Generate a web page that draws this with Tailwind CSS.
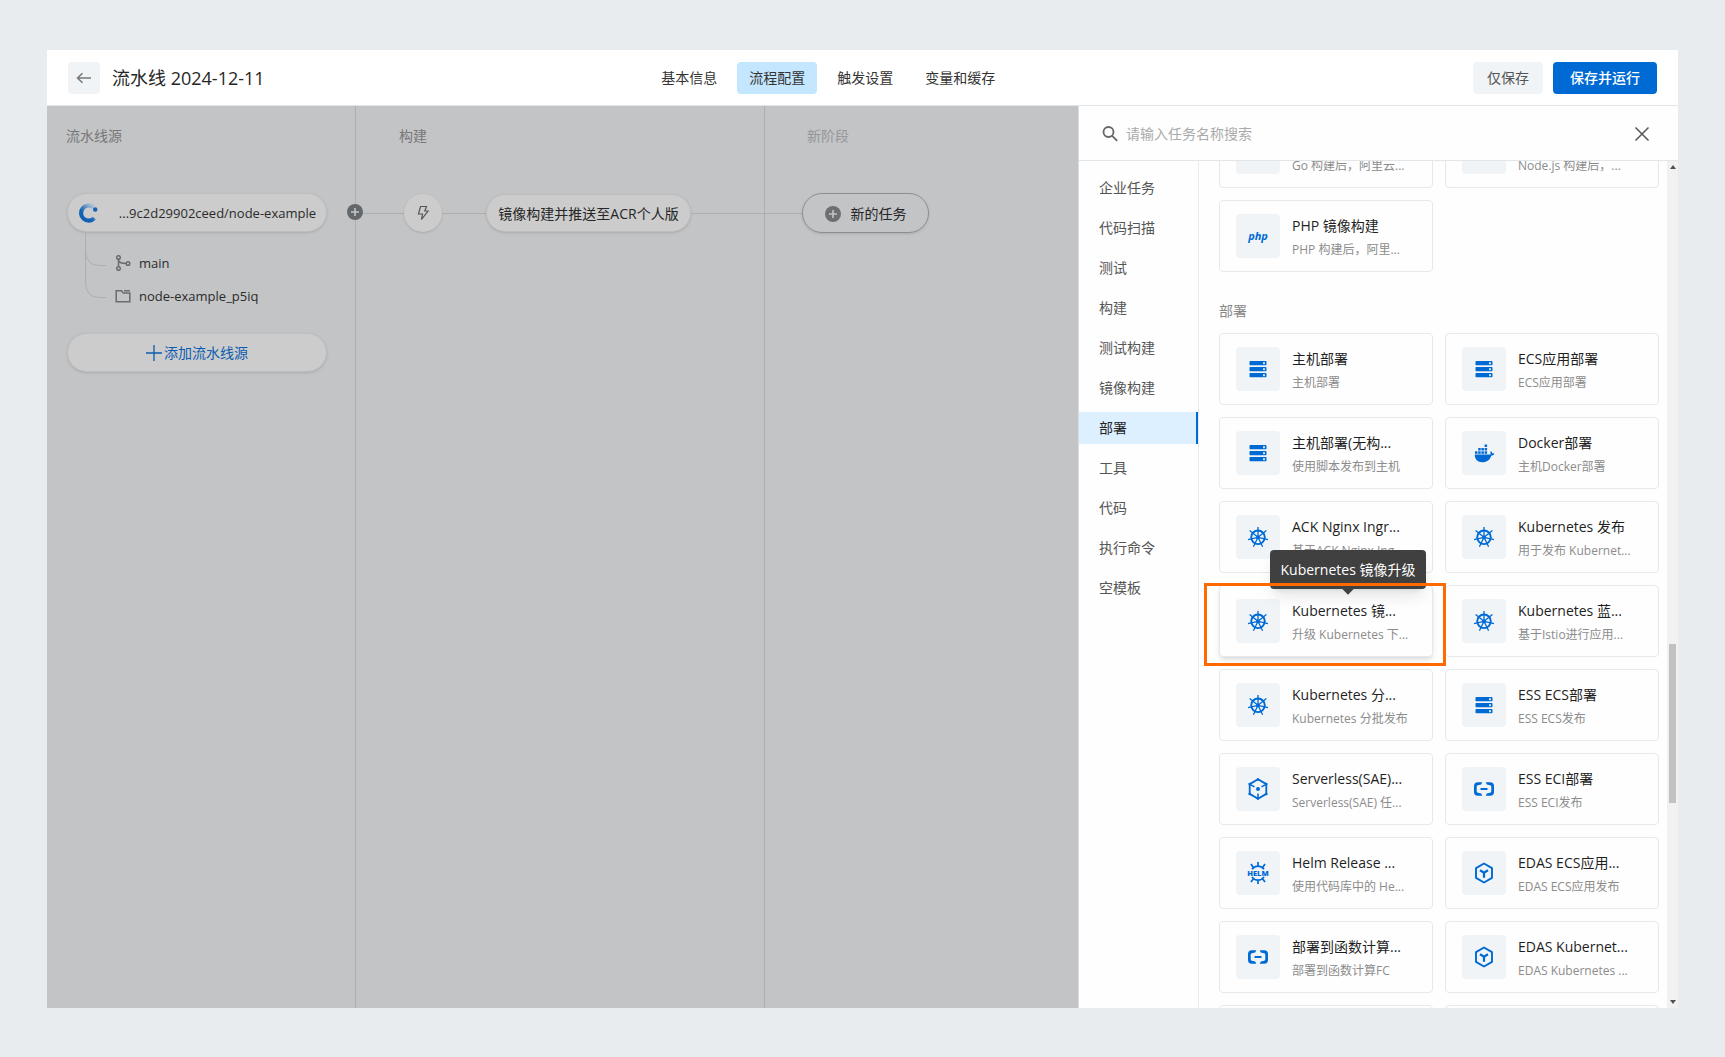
<!DOCTYPE html>
<html lang="zh-CN">
<head>
<meta charset="utf-8">
<title>流水线 2024-12-11</title>
<script src="https://cdn.jsdelivr.net/npm/@tailwindcss/browser@4"></script>
</head>
<body class="flex h-screen flex-col overflow-hidden bg-[#e8ecef] px-[47px] pt-[50px] pb-[49px] font-['Open_Sans','Noto_Sans_CJK_SC',sans-serif] text-sm text-[#333]">

<svg class="hidden" aria-hidden="true">
  <symbol id="server" viewBox="0 0 24 24"><g fill="#006ad4"><rect x="3.500" y="4" width="17" height="4.300" rx=".8"/><rect x="3.500" y="10" width="17" height="4.300" rx=".8"/><rect x="3.500" y="16" width="17" height="4.300" rx=".8"/></g><g fill="#cfe2f6"><rect x="17" y="5.200" width="2" height="2"/><rect x="17" y="11.200" width="2" height="2"/><rect x="17" y="17.200" width="2" height="2"/></g></symbol>
  <symbol id="docker" viewBox="0 0 24 24"><g fill="#006ad4"><path d="M2.800 13.600h15.700c.3-1 .1-1.900-.3-2.700l.8-.6c.8.600 1.300 1.400 1.400 2.100.8-.1 1.500 0 2 .3-.5 1.200-1.600 1.800-3 1.800-1.500 4.500-4.500 6.800-8.900 6.800-4.900 0-7.800-2.800-7.700-7.700z"/><rect x="3" y="10.300" width="2.500" height="2.500"/><rect x="6.200" y="10.300" width="2.500" height="2.500"/><rect x="9.400" y="10.300" width="2.500" height="2.500"/><rect x="12.600" y="10.300" width="2.500" height="2.500"/><rect x="6.200" y="7" width="2.500" height="2.500"/><rect x="9.400" y="7" width="2.500" height="2.500"/><rect x="12.600" y="7" width="2.500" height="2.500"/><rect x="12.600" y="3.500" width="2.500" height="2.500"/></g></symbol>
  <symbol id="k8s" viewBox="0 0 24 24"><g fill="none" stroke="#006ad4"><circle cx="12" cy="12.300" r="6.800" stroke-width="1.900"/><path d="M12 12.300V2M12 12.300l8.400-6.700M12 12.300l10 2.300M12 12.300l4.600 9.500M12 12.300l-4.600 9.500M12 12.300l-10 2.300M12 12.300L3.600 5.600" stroke-width="1.300"/></g><circle cx="12" cy="12.300" r="1.900" fill="#006ad4"/></symbol>
  <symbol id="sae" viewBox="0 0 24 24"><g fill="none" stroke="#006ad4" stroke-width="1.800"><path d="M12 2.300l8.300 4.800v9.800L12 21.700l-8.300-4.800V7.100z"/><path d="M4 7.300l4.500 2.600M20 7.300l-4.500 2.600M12 21.500v-5" stroke-width="1.500"/></g><g fill="#006ad4"><circle cx="12" cy="12" r="2"/><circle cx="12" cy="2.500" r="1.300"/><circle cx="12" cy="21.500" r="1.300"/><circle cx="3.700" cy="7" r="1.300"/><circle cx="20.300" cy="7" r="1.300"/><circle cx="3.700" cy="17" r="1.300"/><circle cx="20.300" cy="17" r="1.300"/></g></symbol>
  <symbol id="aliyun" viewBox="0 0 24 24"><path d="M10.300 5.300L9.200 7.400 5.900 8.200Q4.700 8.600 4.700 9.600v4.800q0 1 1.200 1.400l3.300.8 1.100 2.100H5.800Q2 18.500 2 15V9q0-3.500 3.800-3.700zM13.700 5.300l1.100 2.100 3.300.8q1.200.4 1.200 1.400v4.800q0 1-1.200 1.400l-3.300.8-1.100 2.100h4.500Q22 18.500 22 15V9q0-3.500-3.800-3.700zM8.500 11h7v2h-7z" fill="#006ad4"/></symbol>
  <symbol id="helm" viewBox="0 0 24 24"><g fill="none" stroke="#006ad4" stroke-width="1.700"><path d="M6 8.300a7.200 7.200 0 0 1 12 0M6 15.900a7.200 7.200 0 0 0 12 0M12 5V1M12 19v4M7.200 6.300L5 3M16.800 6.300L19 3M7.200 17.900L5 21M16.800 17.900L19 21"/></g><text x="12" y="14.800" text-anchor="middle" font-family="Open Sans" font-weight="800" font-size="7.500" fill="#006ad4">HELM</text></symbol>
  <symbol id="edas" viewBox="0 0 24 24"><g fill="none" stroke="#006ad4" stroke-width="1.900"><path d="M12 2.500l8 4.600v9.800l-8 4.600-8-4.600V7.100z" stroke-linejoin="round"/><path d="M8 9.300l4 2.500 4-2.500M12 11.800v5" stroke-width="2.200"/></g></symbol>
  <symbol id="php" viewBox="0 0 24 24"><text x="12" y="15.500" text-anchor="middle" font-family="Open Sans" font-weight="700" font-style="italic" font-size="11" fill="#006ad4">php</text></symbol>
  <symbol id="node" viewBox="0 0 24 24"><path d="M12 1l7.500 4.300v9L12 18.600l-7.500-4.300v-9z" fill="none" stroke="#006ad4" stroke-width="2"/></symbol>
</svg>

<header class="grid h-14 shrink-0 grid-cols-[17fr_auto_19fr] items-center border-b border-[#e3e6e9] bg-white px-[21px]">
  <div class="flex items-center gap-3">
    <button type="button" aria-label="返回" class="flex size-8 items-center justify-center rounded bg-[#f0f4f7]">
      <svg class="size-4" viewBox="0 0 16 16" fill="none" stroke="#777" stroke-width="1.500"><path d="M15 8H1.500M6.500 3.200L1.500 8l5 4.800"/></svg>
    </button>
    <h1 class="text-lg leading-6 text-[#262626]">流水线 2024-12-11</h1>
  </div>
  <nav class="flex gap-2 leading-5">
    <a href="#" class="rounded px-3 py-1.5">基本信息</a>
    <a href="#" aria-current="page" class="rounded bg-[#c4e6ff] px-3 py-1.5">流程配置</a>
    <a href="#" class="rounded px-3 py-1.5">触发设置</a>
    <a href="#" class="rounded px-3 py-1.5">变量和缓存</a>
  </nav>
  <div class="flex justify-end gap-2.5">
    <button type="button" class="h-8 rounded bg-[#f0f4f7] px-3.5 text-[#555]">仅保存</button>
    <button type="button" class="h-8 rounded bg-[#006ad4] px-[17px] font-medium text-white">保存并运行</button>
  </div>
</header>

<main class="flex min-h-0 flex-1">
  <div class="flex min-w-0 flex-1 overflow-hidden bg-[#c3c4c6]">
    <section class="relative w-[309px] shrink-0 border-r border-[#acaeb1] pr-7 pl-5">
      <h2 class="-ml-px pt-5 leading-5 text-[#777]">流水线源</h2>
      <div class="mt-[47px] flex h-[39px] items-center justify-between rounded-full border border-[#bdbebf] bg-[#cccccc] px-2.5 shadow-sm">
        <svg class="size-5" viewBox="0 0 20 20"><defs><linearGradient id="ring" x1="0" y1="1" x2=".8" y2="0"><stop offset=".4" stop-color="#1161b5"/><stop offset="1" stop-color="#a9bdd2"/></linearGradient></defs><path d="M15.500 4.200a7.600 7.600 0 1 0 .8 11" fill="none" stroke="url(#ring)" stroke-width="4.200"/><circle cx="17.200" cy="6.500" r="2.200" fill="#1161b5"/></svg>
        <span class="pt-0.5 text-[13px] text-[#2b2b2b]">...9c2d29902ceed/node-example</span>
      </div>
      <div class="flex pl-[18px]">
        <svg class="h-[67px] w-[21px] shrink-0" viewBox="0 0 21 67" fill="none" stroke="#acaeb1"><path d="M.5 0v50q0 15.500 14 15.500h6.500M.5 18q0 15.500 14 15.500h6.500"/></svg>
        <ul class="pt-[18px] pl-[9px] text-[13px] text-[#2b2b2b]">
          <li class="flex h-[26px] items-center gap-2"><svg class="size-4" viewBox="0 0 16 16" fill="none" stroke="#6b6c6e" stroke-width="1.500"><circle cx="3.500" cy="2.500" r="1.800"/><circle cx="3.500" cy="13.500" r="1.800"/><circle cx="13" cy="8.500" r="1.800"/><path d="M3.500 4.300v7.400M3.500 5.500q1 3 7.700 3"/></svg>main</li>
          <li class="mt-[7px] flex h-[26px] items-center gap-2"><svg class="size-4" viewBox="0 0 16 16" fill="none" stroke="#6b6c6e" stroke-width="1.500"><path d="M1.200 2.700h5.300l1.800 2.400h6.500v8.600H1.200zM9 2.700h5.800"/></svg>node-example_p5iq</li>
        </ul>
      </div>
      <button type="button" class="mt-6 flex h-[39px] w-full items-center justify-center gap-0.5 rounded-full border border-[#bdbebf] bg-[#cccccc] text-[#0b5cb0] shadow-sm">
        <svg class="size-4" viewBox="0 0 16 16" stroke="#0b5cb0" stroke-width="1.300"><path d="M8 0v16M0 8h16"/></svg>添加流水线源
      </button>
      <button type="button" aria-label="添加阶段" class="absolute top-[98px] -right-2 size-4 rounded-full bg-[#63686d]"><svg class="size-4" viewBox="0 0 16 16" stroke="#c3c4c6" stroke-width="1.600"><path d="M8 4v8M4 8h8"/></svg></button>
    </section>
    <section class="w-[409px] shrink-0 border-r border-[#acaeb1]">
      <h2 class="pt-5 pl-[43px] leading-5 text-[#777]">构建</h2>
      <div class="mt-[47px] flex h-10 items-center">
        <span class="h-px w-12 bg-[#acaeb1]"></span>
        <button type="button" aria-label="触发方式" class="flex size-[38px] items-center justify-center rounded-full bg-[#cccccc] shadow-sm"><svg class="size-4" viewBox="0 0 16 16" fill="none" stroke="#555" stroke-width="1.200"><path d="M5.500 1.500h6L9.800 6H13l-6.500 8.500 1-5.500H3.500z"/></svg></button>
        <span class="h-px w-11 bg-[#acaeb1]"></span>
        <button type="button" class="h-[38px] w-[205px] rounded-full border border-[#bdbebf] bg-[#cccccc] pt-0.5 text-[#262626] shadow-sm">镜像构建并推送至ACR个人版</button>
        <span class="h-px flex-1 bg-[#acaeb1]"></span>
      </div>
    </section>
    <section class="flex-1">
      <h2 class="pt-5 pl-[42px] leading-5 text-[#94979a]">新阶段</h2>
      <div class="mt-[47px] flex h-10 items-center">
        <span class="h-px w-[37px] bg-[#acaeb1]"></span>
        <button type="button" class="flex h-10 w-[127px] items-center justify-center gap-2.5 rounded-full border border-[#8b8e92] pt-0.5 text-[#262626] shadow-sm"><svg class="size-4" viewBox="0 0 16 16"><circle cx="8" cy="8" r="8" fill="#6f6f6f"/><path d="M8 4v8M4 8h8" stroke="#c3c4c6" stroke-width="1.600"/></svg>新的任务</button>
      </div>
    </section>
  </div>

  <aside class="flex w-[600px] shrink-0 flex-col border-l border-[#d9dde1] bg-[#fefefe]">
    <div class="flex h-[55px] shrink-0 items-center border-b border-[#e3e6e9] pt-px pr-7 pl-[23px]">
      <label for="search" class="mr-2" aria-label="搜索"><svg class="size-4" viewBox="0 0 16 16" fill="none" stroke="#666" stroke-width="1.800"><circle cx="6.500" cy="6" r="5"/><path d="M10.200 9.800l5 5"/></svg></label>
      <input id="search" type="search" placeholder="请输入任务名称搜索" class="min-w-0 flex-1 outline-none placeholder:text-[#aaa]">
      <button type="button" aria-label="关闭"><svg class="size-4" viewBox="0 0 16 16" stroke="#555" stroke-width="1.500"><path d="M1.500 1.500l13 13M14.500 1.500l-13 13"/></svg></button>
    </div>
    <div class="flex min-h-0 flex-1">
      <nav class="flex w-[120px] shrink-0 flex-col gap-2 border-r border-[#e8ebee] pt-[11px] leading-8 text-[#555]">
        <a href="#" class="pl-5">企业任务</a>
        <a href="#" class="pl-5">代码扫描</a>
        <a href="#" class="pl-5">测试</a>
        <a href="#" class="pl-5">构建</a>
        <a href="#" class="pl-5">测试构建</a>
        <a href="#" class="pl-5">镜像构建</a>
        <a href="#" aria-current="true" class="border-r-2 border-[#006ad4] bg-[#dcf0ff] pl-5 text-[#262626]">部署</a>
        <a href="#" class="pl-5">工具</a>
        <a href="#" class="pl-5">代码</a>
        <a href="#" class="pl-5">执行命令</a>
        <a href="#" class="pl-5">空模板</a>
      </nav>
      <div class="min-w-0 flex-1 overflow-hidden pr-2 pl-5">
        <div id="images" class="-mt-[45px] grid grid-cols-2 gap-3"></div>
        <h3 class="mt-7 mb-3 leading-[21px] text-[#888]">部署</h3>
        <div id="deploy" class="grid grid-cols-2 gap-3"></div>
      </div>
      <div aria-hidden="true" class="flex w-[11px] shrink-0 flex-col items-center bg-[#f1f1f1] py-1">
        <svg class="h-1 w-1.5" viewBox="0 0 6 4"><path d="M3 0l3 4H0z" fill="#505050"/></svg>
        <span class="flex-[475]"></span>
        <span class="w-[7px] flex-[159] bg-[#c1c1c1]"></span>
        <span class="flex-[197]"></span>
        <svg class="h-1 w-1.5" viewBox="0 0 6 4"><path d="M3 4l3-4H0z" fill="#505050"/></svg>
      </div>
    </div>
  </aside>
</main>

<script>
const images = [
  ['php', '', 'Go 构建后，阿里云...'],
  ['node', '', 'Node.js 构建后，...'],
  ['php', 'PHP 镜像构建', 'PHP 构建后，阿里...'],
];
const deploy = [
  ['server', '主机部署', '主机部署'],
  ['server', 'ECS应用部署', 'ECS应用部署'],
  ['server', '主机部署(无构...', '使用脚本发布到主机'],
  ['docker', 'Docker部署', '主机Docker部署'],
  ['k8s', 'ACK Nginx Ingr...', '基于ACK Nginx Ing...'],
  ['k8s', 'Kubernetes 发布', '用于发布 Kubernet...'],
  ['k8s', 'Kubernetes 镜...', '升级 Kubernetes 下...', 'Kubernetes 镜像升级'],
  ['k8s', 'Kubernetes 蓝...', '基于Istio进行应用...'],
  ['k8s', 'Kubernetes 分...', 'Kubernetes 分批发布'],
  ['server', 'ESS ECS部署', 'ESS ECS发布'],
  ['sae', 'Serverless(SAE)...', 'Serverless(SAE) 任...'],
  ['aliyun', 'ESS ECI部署', 'ESS ECI发布'],
  ['helm', 'Helm Release ...', '使用代码库中的 He...'],
  ['edas', 'EDAS ECS应用...', 'EDAS ECS应用发布'],
  ['aliyun', '部署到函数计算...', '部署到函数计算FC'],
  ['edas', 'EDAS Kubernet...', 'EDAS Kubernetes ...'],
  ['edas', '', ''],
  ['edas', '', ''],
];
const card = ([icon, name, desc, tip]) => `
  <button type="button" class="${tip ? 'relative shadow-md ' : ''}flex h-[72px] min-w-0 items-center gap-3 rounded border border-[#e6e9ec] bg-[#fefefe] px-4 text-left">
    <span class="flex size-11 shrink-0 items-center justify-center rounded bg-[#f0f4f7]"><svg class="size-6"><use href="#${icon}"/></svg></span>
    <span class="pt-0.5 whitespace-nowrap">
      <span class="block h-6 leading-6 text-[#1f1f1f]">${name}</span>
      <span class="mt-0.5 block text-xs leading-5 text-[#8c8c8c]">${desc}</span>
    </span>
    ${tip ? `
    <span role="tooltip" class="absolute bottom-[67px] left-[50px] z-10 flex h-[39px] w-[156px] items-center justify-center rounded bg-[#404040] whitespace-nowrap text-white shadow-lg">${tip}
      <span class="absolute -bottom-1 left-1/2 size-2 -translate-x-1/2 rotate-45 bg-[#404040]"></span>
    </span>
    <span class="absolute -top-[3px] -right-[14px] -bottom-[10px] -left-4 z-20 border-3 border-[#ff6a00]"></span>` : ''}
  </button>`;
document.getElementById('images').innerHTML = images.map(card).join('');
document.getElementById('deploy').innerHTML = deploy.map(card).join('');
</script>
</body>
</html>
